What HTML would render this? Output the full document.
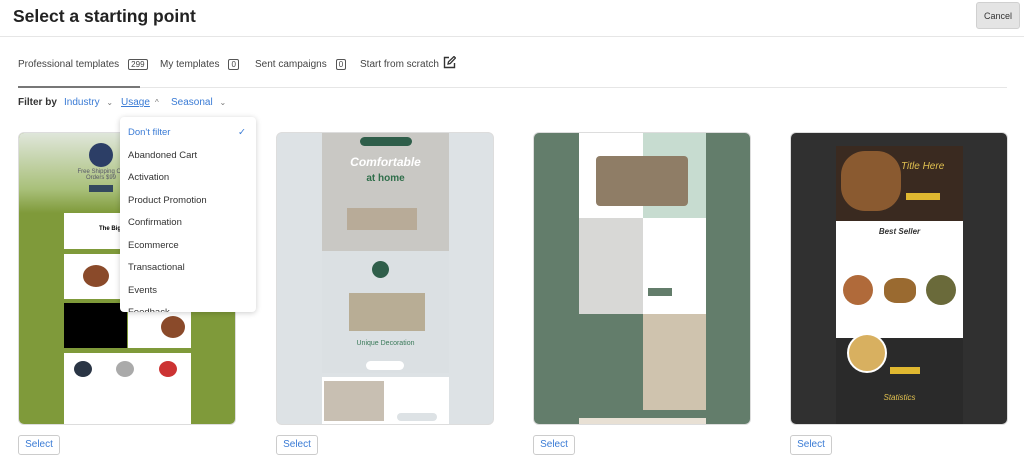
<!DOCTYPE html>
<html><head><meta charset="utf-8"><style>
*{box-sizing:border-box;margin:0;padding:0}
body{width:1024px;height:462px;overflow:hidden;background:#fff;font-family:"Liberation Sans",sans-serif;color:#333;position:relative}
.abs{position:absolute}
h1{position:absolute;left:13px;top:6px;font-size:17.5px;font-weight:bold;color:#222}
.cancel{left:976px;top:2px;width:44px;height:27px;background:#e4e4e4;border:1px solid #d0d0d0;border-radius:3px;font-size:9px;text-align:center;line-height:26px;color:#333}
.hl{left:0;top:36px;width:1024px;height:1px;background:#e6e6e6}
.tab{top:59px;font-size:10px;color:#444}
.badge{display:inline-block;border:1px solid #555;border-radius:2px;font-size:8px;padding:0 2px;line-height:9px;margin-left:9px}
.filt{top:97px;font-size:10px}
.blue{color:#3a7bd5}
.card{top:132px;width:218px;height:293px;border-radius:6px;overflow:hidden;border:1px solid #ddd}
.sel{top:435px;width:42px;height:20px;border:1px solid #ccc;border-radius:3px;font-size:10px;color:#3a7bd5;text-align:center;line-height:18px;background:#fff}
.dd{left:120px;top:117px;width:136px;height:195px;background:#fff;border-radius:4px;box-shadow:0 1px 6px rgba(0,0,0,.2);overflow:hidden}
.dd div{position:absolute;left:8px;font-size:9.5px;color:#333}
.t{position:absolute;text-align:center;white-space:nowrap}
</style></head><body>
<h1>Select a starting point</h1>
<div class="abs cancel">Cancel</div>
<div class="abs hl"></div>
<div class="abs tab" style="left:18px">Professional templates<span class="badge">299</span></div>
<div class="abs tab" style="left:160px">My templates<span class="badge">0</span></div>
<div class="abs tab" style="left:255px">Sent campaigns<span class="badge">0</span></div>
<div class="abs tab" style="left:360px">Start from scratch</div>
<svg class="abs" style="left:443px;top:56px" width="13" height="13" viewBox="0 0 13 13"><path d="M6 1.5H1.5v10h10V7" fill="none" stroke="#333" stroke-width="1.4"/><path d="M5 8l.5-2.2L11 .5l1.5 1.5-5.3 5.5z" fill="none" stroke="#333" stroke-width="1.3"/></svg>
<div class="abs" style="left:18px;top:87px;width:989px;height:1px;background:#e6e6e6"></div>
<div class="abs" style="left:18px;top:86px;width:122px;height:2px;background:#777"></div>
<div class="abs filt" style="left:18px;font-weight:bold;color:#333">Filter by</div>
<div class="abs filt blue" style="left:64px">Industry <span style="color:#777;font-size:8px;margin-left:4px">⌄</span></div>
<div class="abs filt blue" style="left:121px;text-decoration:underline">Usage</div>
<div class="abs filt" style="left:155px;color:#777;font-size:8px;top:98px">^</div>
<div class="abs filt blue" style="left:171px">Seasonal <span style="color:#777;font-size:8px;margin-left:4px">⌄</span></div>

<!-- card1 -->
<div class="abs card" style="left:18px;background:#7f9a3a">
 <div class="abs" style="left:0;top:0;width:218px;height:80px;background:linear-gradient(#dfe6da,#a9c07a 70%,#7f9a3a)"></div>
 <div class="abs" style="left:70px;top:10px;width:24px;height:24px;border-radius:50%;background:#2c3e66"></div>
 <div class="t" style="left:50px;top:36px;width:64px;font-size:6px;color:#556">Free Shipping On<br>Orders $99</div>
 <div class="abs" style="left:70px;top:52px;width:24px;height:7px;background:#34495e"></div>
 <div class="abs" style="left:45px;top:80px;width:127px;height:36px;background:#fff"></div>
 <div class="t" style="left:80px;top:93px;font-size:6px;font-weight:bold;color:#000">The Big Sup</div>
 <div class="abs" style="left:45px;top:121px;width:127px;height:45px;background:#fff"></div>
 <div class="abs" style="left:64px;top:132px;width:26px;height:22px;border-radius:50%;background:#8a4a2a"></div>
 <div class="abs" style="left:45px;top:170px;width:63px;height:45px;background:#000"></div>
 <div class="abs" style="left:109px;top:170px;width:63px;height:45px;background:#fff"></div>
 <div class="abs" style="left:142px;top:183px;width:24px;height:22px;border-radius:50%;background:#8a4a2a"></div>
 <div class="abs" style="left:45px;top:220px;width:127px;height:73px;background:#fff"></div>
 <div class="abs" style="left:55px;top:228px;width:18px;height:16px;border-radius:50%;background:#2a3545"></div>
 <div class="abs" style="left:97px;top:228px;width:18px;height:16px;border-radius:50%;background:#aaa"></div>
 <div class="abs" style="left:140px;top:228px;width:18px;height:16px;border-radius:50%;background:#c33"></div>
</div>
<div class="abs sel" style="left:18px">Select</div>

<!-- card2 -->
<div class="abs card" style="left:276px;background:#dde2e5">
 <div class="abs" style="left:45px;top:0;width:127px;height:118px;background:#c9c8c4"></div>
 <div class="abs" style="left:83px;top:4px;width:52px;height:9px;border-radius:5px;background:#2f5e4a"></div>
 <div class="t" style="left:45px;top:22px;width:127px;font-size:12px;font-style:italic;font-weight:bold;color:#fff">Comfortable</div>
 <div class="t" style="left:45px;top:40px;width:127px;font-size:10px;font-weight:bold;color:#2f6e4a">at home</div>
 <div class="abs" style="left:70px;top:75px;width:70px;height:22px;background:#b8ab98"></div>
 <div class="abs" style="left:45px;top:118px;width:127px;height:122px;background:#dbe0e3"></div>
 <div class="abs" style="left:95px;top:128px;width:17px;height:17px;border-radius:50%;background:#2f5e4a"></div>
 <div class="abs" style="left:72px;top:160px;width:76px;height:38px;background:#a08a60;opacity:.6"></div>
 <div class="t" style="left:45px;top:207px;width:127px;font-size:7px;color:#3a7a5a">Unique Decoration</div>
 <div class="abs" style="left:89px;top:228px;width:38px;height:9px;border-radius:5px;background:#fff"></div>
 <div class="abs" style="left:45px;top:244px;width:127px;height:49px;background:#fff"></div>
 <div class="abs" style="left:47px;top:248px;width:60px;height:40px;background:#c8bfb2"></div>
 <div class="abs" style="left:120px;top:280px;width:40px;height:8px;border-radius:4px;background:#dde2e5"></div>
</div>
<div class="abs sel" style="left:276px">Select</div>

<!-- card3 -->
<div class="abs card" style="left:533px;background:#637d6b">
 <div class="abs" style="left:45px;top:0;width:64px;height:85px;background:#fff"></div>
 <div class="abs" style="left:109px;top:0;width:63px;height:85px;background:#c7dcd0"></div>
 <div class="abs" style="left:62px;top:23px;width:92px;height:50px;border-radius:4px;background:#8f7d66"></div>
 <div class="abs" style="left:45px;top:85px;width:64px;height:96px;background:#d8d8d6"></div>
 <div class="abs" style="left:109px;top:85px;width:63px;height:96px;background:#fff"></div>
 <div class="abs" style="left:114px;top:155px;width:24px;height:8px;background:#637d6b"></div>
 <div class="abs" style="left:109px;top:181px;width:63px;height:96px;background:#cfc3ae"></div>
 <div class="abs" style="left:45px;top:285px;width:127px;height:8px;background:#e8e0d4"></div>
</div>
<div class="abs sel" style="left:533px">Select</div>

<!-- card4 -->
<div class="abs card" style="left:790px;background:#303030">
 <div class="abs" style="left:45px;top:13px;width:127px;height:75px;background:#3a2a20"></div>
 <div class="abs" style="left:50px;top:18px;width:60px;height:60px;border-radius:40%;background:#8a5a30"></div>
 <div class="t" style="left:110px;top:28px;font-size:10px;font-style:italic;color:#e0c050">Title Here</div>
 <div class="abs" style="left:115px;top:60px;width:34px;height:7px;background:#e0b830"></div>
 <div class="abs" style="left:45px;top:88px;width:127px;height:140px;background:#fff"></div>
 <div class="t" style="left:45px;top:94px;width:127px;font-size:8px;font-style:italic;font-weight:bold;color:#333">Best Seller</div>
 <div class="abs" style="left:52px;top:142px;width:30px;height:30px;border-radius:50%;background:#b06a3a"></div>
 <div class="abs" style="left:93px;top:145px;width:32px;height:25px;border-radius:40%;background:#9a6a30"></div>
 <div class="abs" style="left:135px;top:142px;width:30px;height:30px;border-radius:50%;background:#6a6a3a"></div>
 <div class="abs" style="left:45px;top:205px;width:127px;height:88px;background:#2a2a2a"></div>
 <div class="abs" style="left:56px;top:200px;width:40px;height:40px;border-radius:50%;background:#d8b060;border:2px solid #fff"></div>
 <div class="abs" style="left:99px;top:234px;width:30px;height:7px;background:#e0b830"></div>
 <div class="t" style="left:45px;top:260px;width:127px;font-size:8px;font-style:italic;color:#e0c050">Statistics</div>
</div>
<div class="abs sel" style="left:790px">Select</div>

<div class="abs dd">
 <div style="top:10px;color:#3a7bd5">Don't filter</div>
 <div style="top:10px;left:118px;color:#3a7bd5">✓</div>
 <div style="top:33px">Abandoned Cart</div>
 <div style="top:55px">Activation</div>
 <div style="top:78px">Product Promotion</div>
 <div style="top:100px">Confirmation</div>
 <div style="top:123px">Ecommerce</div>
 <div style="top:145px">Transactional</div>
 <div style="top:168px">Events</div>
 <div style="top:190px">Feedback</div>
</div>
</body></html>
